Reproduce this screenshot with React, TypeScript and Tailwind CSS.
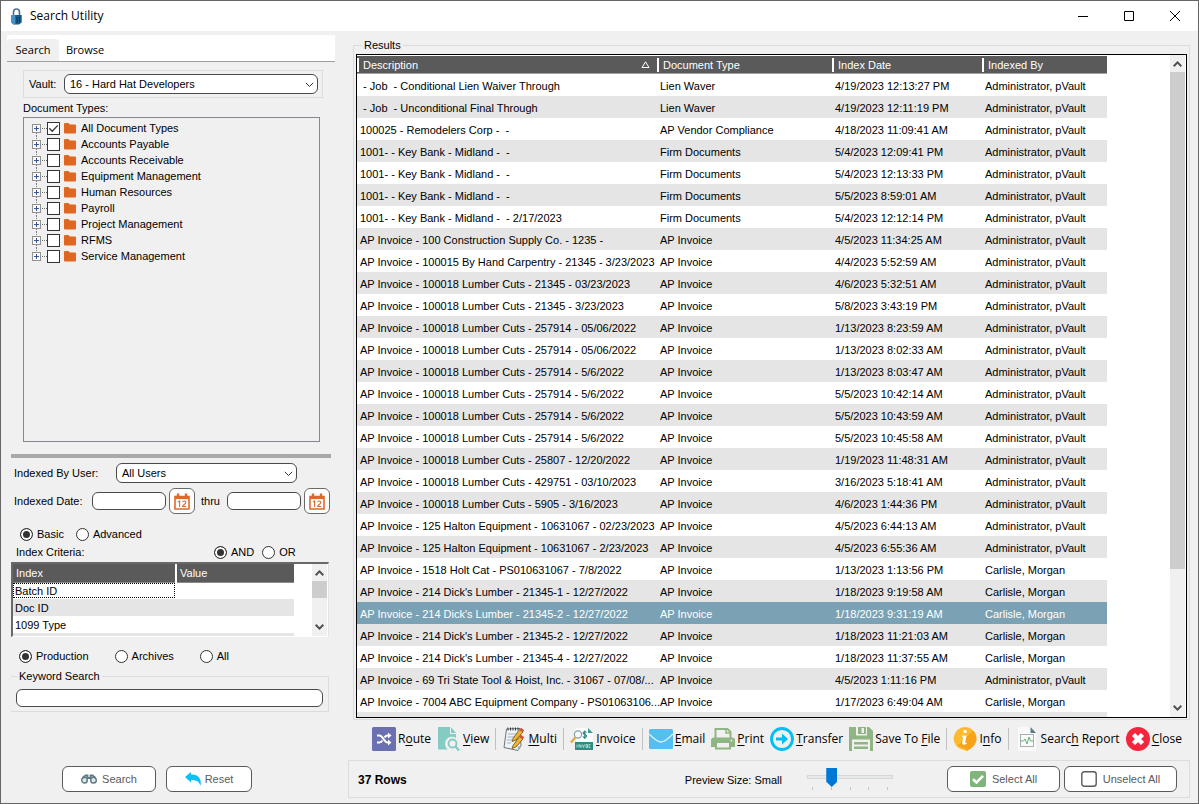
import React from "react";

type Row = [string, string, string, string];

const ADMIN = "Administrator, pVault";
const MORGAN = "Carlisle, Morgan";

const rows: Row[] = [
  [" - Job  - Conditional Lien Waiver Through", "Lien Waver", "4/19/2023 12:13:27 PM", ADMIN],
  [" - Job  - Unconditional Final Through", "Lien Waver", "4/19/2023 12:11:19 PM", ADMIN],
  ["100025 - Remodelers Corp -  -", "AP Vendor Compliance", "4/18/2023 11:09:41 AM", ADMIN],
  ["1001- - Key Bank - Midland -  -", "Firm Documents", "5/4/2023 12:09:41 PM", ADMIN],
  ["1001- - Key Bank - Midland -  -", "Firm Documents", "5/4/2023 12:13:33 PM", ADMIN],
  ["1001- - Key Bank - Midland -  -", "Firm Documents", "5/5/2023 8:59:01 AM", ADMIN],
  ["1001- - Key Bank - Midland -  - 2/17/2023", "Firm Documents", "5/4/2023 12:12:14 PM", ADMIN],
  ["AP Invoice - 100 Construction Supply Co. - 1235 -", "AP Invoice", "4/5/2023 11:34:25 AM", ADMIN],
  ["AP Invoice - 100015 By Hand Carpentry - 21345 - 3/23/2023", "AP Invoice", "4/4/2023 5:52:59 AM", ADMIN],
  ["AP Invoice - 100018 Lumber Cuts - 21345 - 03/23/2023", "AP Invoice", "4/6/2023 5:32:51 AM", ADMIN],
  ["AP Invoice - 100018 Lumber Cuts - 21345 - 3/23/2023", "AP Invoice", "5/8/2023 3:43:19 PM", ADMIN],
  ["AP Invoice - 100018 Lumber Cuts - 257914 - 05/06/2022", "AP Invoice", "1/13/2023 8:23:59 AM", ADMIN],
  ["AP Invoice - 100018 Lumber Cuts - 257914 - 05/06/2022", "AP Invoice", "1/13/2023 8:02:33 AM", ADMIN],
  ["AP Invoice - 100018 Lumber Cuts - 257914 - 5/6/2022", "AP Invoice", "1/13/2023 8:03:47 AM", ADMIN],
  ["AP Invoice - 100018 Lumber Cuts - 257914 - 5/6/2022", "AP Invoice", "5/5/2023 10:42:14 AM", ADMIN],
  ["AP Invoice - 100018 Lumber Cuts - 257914 - 5/6/2022", "AP Invoice", "5/5/2023 10:43:59 AM", ADMIN],
  ["AP Invoice - 100018 Lumber Cuts - 257914 - 5/6/2022", "AP Invoice", "5/5/2023 10:45:58 AM", ADMIN],
  ["AP Invoice - 100018 Lumber Cuts - 25807 - 12/20/2022", "AP Invoice", "1/19/2023 11:48:31 AM", ADMIN],
  ["AP Invoice - 100018 Lumber Cuts - 429751 - 03/10/2023", "AP Invoice", "3/16/2023 5:18:41 AM", ADMIN],
  ["AP Invoice - 100018 Lumber Cuts - 5905 - 3/16/2023", "AP Invoice", "4/6/2023 1:44:36 PM", ADMIN],
  ["AP Invoice - 125 Halton Equipment - 10631067 - 02/23/2023", "AP Invoice", "4/5/2023 6:44:13 AM", ADMIN],
  ["AP Invoice - 125 Halton Equipment - 10631067 - 2/23/2023", "AP Invoice", "4/5/2023 6:55:36 AM", ADMIN],
  ["AP Invoice - 1518 Holt Cat - PS010631067 - 7/8/2022", "AP Invoice", "1/13/2023 1:13:56 PM", MORGAN],
  ["AP Invoice - 214 Dick's Lumber - 21345-1 - 12/27/2022", "AP Invoice", "1/18/2023 9:19:58 AM", MORGAN],
  ["AP Invoice - 214 Dick's Lumber - 21345-2 - 12/27/2022", "AP Invoice", "1/18/2023 9:31:19 AM", MORGAN],
  ["AP Invoice - 214 Dick's Lumber - 21345-2 - 12/27/2022", "AP Invoice", "1/18/2023 11:21:03 AM", MORGAN],
  ["AP Invoice - 214 Dick's Lumber - 21345-4 - 12/27/2022", "AP Invoice", "1/18/2023 11:37:55 AM", MORGAN],
  ["AP Invoice - 69 Tri State Tool & Hoist, Inc. - 31067 - 07/08/...", "AP Invoice", "4/5/2023 1:11:16 PM", ADMIN],
  ["AP Invoice - 7004 ABC Equipment Company - PS01063106...", "AP Invoice", "1/17/2023 6:49:04 AM", MORGAN],
];

const SELECTED_ROW = 24;

const docTypes = [
  "All Document Types",
  "Accounts Payable",
  "Accounts Receivable",
  "Equipment Management",
  "Human Resources",
  "Payroll",
  "Project Management",
  "RFMS",
  "Service Management",
];

function Chevron({ up = false }: { up?: boolean }) {
  return (
    <svg width="9" height="6" viewBox="0 0 9 6" fill="none" stroke="#505050" strokeWidth="2">
      <path d={up ? "M.7 5.2 4.5 1.4 8.3 5.2" : "M.7 .8 4.5 4.6 8.3 .8"} />
    </svg>
  );
}

function Dropdown({ id, value, className }: { id: string; value: string; className: string }) {
  return (
    <div className={`relative ${className}`}>
      <select
        id={id}
        className="block h-5 w-full appearance-none rounded-md border border-[#4a4a4a] bg-white pr-6 pl-[5px] text-[11px] leading-4 outline-none"
      >
        <option>{value}</option>
      </select>
      <svg className="pointer-events-none absolute top-2 right-1" width="9" height="6" viewBox="0 0 9 6" fill="none" stroke="#333">
        <path d="M.8 .8 4.5 4.5 8.2 .8" />
      </svg>
    </div>
  );
}

function Radio({ name, label, checked = false }: { name: string; label: string; checked?: boolean }) {
  return (
    <label className="flex items-center gap-1">
      <input
        type="radio"
        name={name}
        defaultChecked={checked}
        className="size-[13px] appearance-none rounded-full border border-[#333] bg-white checked:bg-[#333] checked:shadow-[inset_0_0_0_2px_white]"
      />
      {label}
    </label>
  );
}

function CalendarButton({ label }: { label: string }) {
  return (
    <button aria-label={label} className="flex size-[26px] items-center justify-center rounded-md border border-[#6a6a6a] bg-white">
      <svg width="16" height="17" viewBox="0 0 16 17" fill="none" stroke="#dd6b2c">
        <path d="M1 3.5h14v12.5H1z" strokeWidth="1.6" />
        <path d="M1 4.8h14" strokeWidth="2.6" />
        <path d="M4 .5v4M12 .5v4" strokeWidth="2.4" />
        <path d="M4 9l1.6-1v6M8.6 9.2c.3-1.6 3.2-1.5 3.2.2 0 1.500-3.200 3-3.200 4.100h3.600" strokeWidth="1.1" />
      </svg>
    </button>
  );
}

function TreeRow({ label, index, last }: { label: string; index: number; last: boolean }) {
  return (
    <li className="flex h-4 items-center">
      <button aria-label={`Expand ${label}`} className="h-4 w-[15px]">
        <svg width="15" height="16" viewBox="0 0 15 16" fill="none" shapeRendering="crispEdges">
          {!last && <path d="M4.5 13v3" stroke="#777" strokeDasharray="1 1" />}
          {index > 0 && <path d="M4.5 0v3" stroke="#777" strokeDasharray="1 1" />}
          <path d="M10 8.5h5" stroke="#777" strokeDasharray="1 1" />
          <rect x=".5" y="4.5" width="8" height="8" fill="#fafafa" stroke="#919191" />
          <path d="M2 8.5h5M4.5 6v5" stroke="#3a559b" />
        </svg>
      </button>
      <label className="flex h-4 items-center">
        <span className="relative flex size-[13px]">
          <input
            type="checkbox"
            defaultChecked={index === 0}
            className="peer size-[13px] appearance-none border border-[#333] bg-white"
          />
          <svg className="pointer-events-none absolute inset-0 hidden peer-checked:block" width="13" height="13" viewBox="0 0 13 13" fill="none" stroke="#333" strokeWidth="1.3">
            <path d="M2.3 6.3 5.2 9.2 10.8 3.4" />
          </svg>
        </span>
        <svg className="mr-[5px] ml-1" width="12" height="11" viewBox="0 0 12 11" fill="#e0671f">
          <path d="M1 0h3.6l1.2 1.6H11a1 1 0 0 1 1 1V9.5a1 1 0 0 1-1 1H1a1 1 0 0 1-1-1V1a1 1 0 0 1 1-1z" />
        </svg>
        {label}
      </label>
    </li>
  );
}

const icons: Record<string, React.ReactNode> = {
  route: (
    <svg width="24" height="24" viewBox="0 0 24 24" fill="none">
      <rect width="24" height="24" rx="1.5" fill="#6a70b2" />
      <g stroke="#fff" strokeWidth="2">
        <path d="M5 8.5h2.5c3.5 0 4.5 7 8 7H17" />
        <path d="M5 15.5h2.5c1.3 0 2.2-.9 2.9-2M12.5 10.5c.8-1.2 1.7-2 3-2H17" />
      </g>
      <path d="M16 5.5 19.5 8.5 16 11.5zM16 12.5 19.5 15.5 16 18.5z" fill="#fff" />
    </svg>
  ),
  view: (
    <svg width="24" height="24" viewBox="0 0 24 24" fill="none">
      <path d="M1 0h12v7h6v4a7 7 0 0 0-8 11.5H1z" fill="#84cbc4" />
      <path d="M14 0v6h5z" fill="#84cbc4" />
      <circle cx="15.500" cy="16.500" r="4" stroke="#84cbc4" strokeWidth="1.8" />
      <path d="M18.500 19.500 22 23.500" stroke="#84cbc4" strokeWidth="2.2" />
    </svg>
  ),
  multi: (
    <svg width="24" height="24" viewBox="0 0 24 24" fill="none">
      <path d="M4.500 2 18 1.500 19 19 16 23.500 2 20.500z" fill="#eef3f8" stroke="#6d747c" />
      <path d="M16 23.500 15.500 19.500 19 19z" fill="#a9b3bd" />
      <path d="M6 7h9M5.500 10h7M5 13h5M5 16h4" stroke="#9fb3c6" />
      <path d="M6 .5v3M8.500 .5v3M11 .5v3M13.500 .5v3M16 .5v3" stroke="#3c3c3c" />
      <path d="M11 11.500 17.500 2.500 21 5 14 13 10 14.500z" fill="#f0b52f" stroke="#6d4d1a" strokeWidth=".8" />
      <path d="M17.500 2.500 19 .8 22.200 3.200 21 5z" fill="#d84c3e" />
      <path d="M11 18.500 17.500 9.500 21 12 14 20 10 21.500z" fill="#f0b52f" stroke="#6d4d1a" strokeWidth=".8" />
      <path d="M17.500 9.500 19 7.800 22.200 10.200 21 12z" fill="#d84c3e" />
    </svg>
  ),
  invoice: (
    <svg width="24" height="24" viewBox="0 0 24 24" fill="none">
      <path d="M6 1h12l5 5v17H6z" fill="#fff" />
      <path d="M18 1l5 5h-5z" fill="#3b9c8e" />
      <circle cx="8" cy="7.500" r="3.600" stroke="#8a9da8" strokeWidth="1.2" fill="#f8fcff" />
      <path d="M5.300 10.500 1 15.500" stroke="#eba53a" strokeWidth="2.2" />
      <path d="M16.500 5.500c-.7-1.200-3.400-1-3.400.6 0 1.900 3.500 1 3.500 3 0 1.700-3 1.800-3.700.4M14.800 3.500v8.500" stroke="#247f78" strokeWidth="1.1" />
      <rect x="5" y="15" width="18" height="8" fill="#2f8c80" />
      <path d="M7 17.500v3M9 20.500v-3l2 3v-3M12.500 17.500l1 3 1-3M16 17.500h1.500v3H16zM20.500 17.500H19v3h1.500" stroke="#cfe9e5" strokeWidth=".8" />
    </svg>
  ),
  email: (
    <svg width="24" height="20" viewBox="0 0 24 20" fill="none">
      <rect width="24" height="20" rx="1.5" fill="#55bff0" />
      <path d="M0 5c4 3.500 8 8 12 8s8-4.500 12-8" stroke="#d9f2fd" strokeWidth="1.3" />
    </svg>
  ),
  print: (
    <svg width="24" height="24" viewBox="0 0 24 24" fill="none">
      <path d="M4.500 11V2h12l3 3v6" stroke="#8fb583" strokeWidth="2" />
      <path d="M15 1v5h5" stroke="#8fb583" strokeWidth="1.5" />
      <path d="M3 10.500h18a3 3 0 0 1 3 3V20h-4v-4H4v4H0v-6.500a3 3 0 0 1 3-3z" fill="#8fb583" />
      <path d="M5 16v5.500h14V16" stroke="#8fb583" strokeWidth="2" />
      <circle cx="20.500" cy="13.500" r=".9" fill="#f0f0f0" />
    </svg>
  ),
  transfer: (
    <svg width="24" height="24" viewBox="0 0 24 24" fill="none">
      <circle cx="12" cy="12" r="10.500" stroke="#00bff3" strokeWidth="2.8" />
      <path d="M6 10.500h6V6.500L18 12l-6 5.500v-4H6z" fill="#00bff3" />
    </svg>
  ),
  save: (
    <svg width="24" height="24" viewBox="0 0 24 24" fill="#8fb583">
      <path d="M0 0h7v8.500h11V0h2l4 4v20h-3V12.500H3V24H0z" />
      <path d="M9 0h8v7H9zM5 15h14v2.500H5zM5 19.500h14V22H5z" />
      <path d="M12.500 1h2.500v5h-2.500z" fill="#f0f0f0" />
    </svg>
  ),
  info: (
    <svg width="24" height="24" viewBox="0 0 24 24">
      <path d="M12 0a11.500 11.500 0 0 0-2 22.800L14 24l4.500-3A11.500 11.500 0 0 0 12 0z" fill="#ffb92e" />
      <path d="M20 3.500A11.500 11.500 0 0 1 17.500 21.500L14 24v-1.500L4.500 19z" fill="#f6a31a" />
      <path d="M13.300 3.200a1.700 1.700 0 1 1-2.400 2.400 1.700 1.700 0 0 1 2.400-2.400zM9.500 8.500h4l-1.300 7c0 .8.800.6 1.600.1l-.2 1.200c-2 1.500-4.800 1.400-4.400-1l.9-5.600-1.200-.3z" fill="#fff" />
    </svg>
  ),
  report: (
    <svg width="24" height="24" viewBox="0 0 24 24" fill="none">
      <path d="M3 0h13l5 6v18H3z" fill="#fafafa" />
      <path d="M15.500 0 21 6h-5.500z" fill="#5d7885" />
      <rect x="5.500" y="7.500" width="13" height="12" stroke="#a3b0b6" />
      <path d="M5.500 14h3l1.500-2 2 5 2-7 1.500 4h3" stroke="#6bb074" />
    </svg>
  ),
  close: (
    <svg width="24" height="24" viewBox="0 0 24 24" fill="none">
      <circle cx="12" cy="12" r="12" fill="#f5253d" />
      <path d="M7.500 7.500l9 9M16.500 7.500l-9 9" stroke="#fff" strokeWidth="4.5" />
    </svg>
  ),
};

function Tool({ icon, pre = "", hot, post = "" }: { icon: string; pre?: string; hot: string; post?: string }) {
  return (
    <button className="flex h-6 items-center gap-0.5 whitespace-nowrap">
      {icons[icon]}
      <span>
        {pre}
        <span className="underline underline-offset-2">{hot}</span>
        {post}
      </span>
    </button>
  );
}

function Separator() {
  return <div className="h-[22px] w-px bg-[#c0c0c0]" />;
}

function Th({ children, className }: { children: React.ReactNode; className: string }) {
  return (
    <th className={`p-0 text-left font-normal ${className}`}>
      <div className="flex h-[14px] items-center border-l-2 border-white pt-px pr-[7px] pl-1">{children}</div>
    </th>
  );
}

export default function App() {
  return (
    <div className="flex h-screen flex-col border border-[#666] bg-[#f0f0f0] font-['Liberation_Sans',Arial,sans-serif] text-[11px] leading-4 text-black">
      <header className="flex h-[30px] shrink-0 items-center bg-white pl-2.5 font-['Open_Sans','Segoe_UI',sans-serif] text-xs">
        <svg className="mr-2" width="11" height="17" viewBox="0 0 11 17" fill="none">
          <path d="M2.500 8V4a3 3 0 0 1 6 0v4" stroke="#4f7186" strokeWidth="1.6" />
          <path d="M.3 7h10.400v7.500L8 16.500H2.500L.3 14.500z" fill="#175a8a" />
          <path d="M.3 7h4v9L2.500 16.500.3 14.500z" fill="#4694c6" />
          <path d="M6 9v6M8.500 9v5" stroke="#0c3c62" />
        </svg>
        <h1 className="grow">Search Utility</h1>
        <button aria-label="Minimize" className="flex h-full w-[46px] items-center justify-center">
          <svg width="10" height="10" stroke="#000"><path d="M0 5.5h10" /></svg>
        </button>
        <button aria-label="Maximize" className="flex h-full w-[46px] items-center justify-center">
          <svg width="10" height="10" fill="none" stroke="#000"><path d="M.5 .5h9v9h-9z" /></svg>
        </button>
        <button aria-label="Close window" className="flex h-full w-[46px] items-center justify-center">
          <svg width="10" height="10" stroke="#000"><path d="M0 0l10 10M10 0L0 10" /></svg>
        </button>
      </header>

      <div className="flex min-h-0 grow">
        <aside className="flex w-[346px] shrink-0 flex-col pt-1">
          <div className="mr-3 ml-1.5 flex h-[27px] items-end border-b border-[#a0a0a0] bg-white font-['Open_Sans','Segoe_UI',sans-serif] text-[11px]">
            <button className="h-[22px] w-[52px] rounded-t bg-[#f0f0f0]">Search</button>
            <button className="h-[22px] w-[52px]">Browse</button>
          </div>

          <div className="mt-2 mr-6 ml-[22px] flex h-7 items-center border border-[#dcdcdc] pr-[3px] pl-[5px]">
            <label htmlFor="vault" className="w-[35px]">Vault:</label>
            <Dropdown id="vault" value="16 - Hard Hat Developers" className="w-[254px]" />
          </div>
          <div className="mt-[2px] ml-[22px]">Document Types:</div>
          <ul className="mt-[1px] mr-[27px] ml-[22px] grow border border-[#828790] pt-0.5 pl-2">
            {docTypes.map((label, i) => (
              <TreeRow key={label} label={label} index={i} last={i === docTypes.length - 1} />
            ))}
          </ul>

          <div className="mt-3 mr-4 ml-2.5 h-1 shrink-0 bg-[#a8a8a8]" />

          <div className="mt-[5px] ml-[13px] flex items-center">
            <label htmlFor="user" className="w-[102px]">Indexed By User:</label>
            <Dropdown id="user" value="All Users" className="w-[181px]" />
          </div>
          <div className="mt-[5px] ml-[13px] flex items-center">
            <label htmlFor="from" className="w-[78px]">Indexed Date:</label>
            <input id="from" className="mr-[3px] h-[18px] w-[74px] rounded-md border border-[#4a4a4a] bg-white px-1" />
            <CalendarButton label="Choose start date" />
            <label htmlFor="to" className="w-8 pl-1.5">thru</label>
            <input id="to" className="mr-[3px] h-[18px] w-[74px] rounded-md border border-[#4a4a4a] bg-white px-1" />
            <CalendarButton label="Choose end date" />
          </div>

          <div className="mt-3 ml-[19px] flex gap-3">
            <Radio name="mode" label="Basic" checked />
            <Radio name="mode" label="Advanced" />
          </div>
          <div className="mt-[2px] ml-[15px] flex items-center gap-2">
            <span className="w-[190px]">Index Criteria:</span>
            <Radio name="join" label="AND" checked />
            <Radio name="join" label="OR" />
          </div>

          <div className="mt-[2px] mr-[18px] ml-2.5 flex h-[75px] shrink-0 overflow-hidden border-t-2 border-r border-b border-l-2 border-t-[#696969] border-r-[#e3e3e3] border-b-white border-l-[#696969] bg-white pr-px">
            <div className="grow">
              <table className="w-[281px] table-fixed border-collapse">
                <thead>
                  <tr className="h-[18px] border-b border-[#8a8a8a] bg-[#5a5a5a] text-white">
                    <th className="w-[163px] border-r-2 border-white p-0 pl-[3px] text-left font-normal">Index</th>
                    <th className="p-0 pl-[3px] text-left font-normal">Value</th>
                  </tr>
                </thead>
                <tbody>
                  {["Batch ID", "Doc ID", "1099 Type", ""].map((name, i) => (
                    <tr key={name} className="h-[17px] odd:bg-white even:bg-[#e5e5e5]">
                      <td className="p-0">
                        <div className={i === 0 ? "h-[15px] w-[162px] border border-dotted border-black pl-px leading-[15px]" : "h-[17px] pt-px pl-0.5 leading-[17px]"}>{name}</div>
                      </td>
                      <td />
                    </tr>
                  ))}
                </tbody>
              </table>
            </div>
            <div className="flex w-[15px] flex-col items-center bg-[#f0f0f0]">
              <div className="flex h-[17px] items-center"><Chevron up /></div>
              <div className="h-[17px] w-full bg-[#cdcdcd]" />
              <div className="flex grow items-end pb-1.5"><Chevron /></div>
            </div>
          </div>

          <div className="mt-[11px] ml-[18px] flex gap-[26px]">
            <Radio name="scope" label="Production" checked />
            <Radio name="scope" label="Archives" />
            <Radio name="scope" label="All" />
          </div>

          <fieldset className="mt-1 mr-[18px] ml-2.5 border border-l-0 border-[#dcdcdc] px-[5px] pb-1">
            <legend className="ml-px px-0.5">
              <label htmlFor="keyword">Keyword Search</label>
            </legend>
            <input id="keyword" className="mt-[5px] block h-[18px] w-full rounded-md border border-[#4a4a4a] bg-white px-1" />
          </fieldset>

          <div className="mt-[54px] mb-[11px] ml-[61px] flex gap-2.5 text-[#5a5a5a]">
            <button className="flex h-[26px] w-[94px] items-center justify-center gap-[5px] rounded-md border border-[#5a5a5a] bg-white">
              <svg width="16" height="10" viewBox="0 0 16 10" fill="none" stroke="#5f7886" strokeWidth="1.4">
                <circle cx="3.500" cy="6.200" r="2.800" fill="#dfe7ea" />
                <circle cx="12.500" cy="6.200" r="2.800" fill="#dfe7ea" />
                <path d="M1.500 4 4.500 1.500h2V5M14.500 4l-3-2.500h-2V5M6.500 4h3" strokeWidth="1.8" />
              </svg>
              Search
            </button>
            <button className="flex h-[26px] w-[86px] items-center justify-center gap-1 rounded-md border border-[#5a5a5a] bg-white">
              <svg width="16" height="14" viewBox="0 0 16 14" fill="#0fc0f5">
                <path d="M0 5 6 0v2.500c7 0 11 3.500 9.500 11.500C14.500 9.500 11 8 6 8v2.500z" />
              </svg>
              Reset
            </button>
          </div>
        </aside>

        <main className="mr-2 flex min-w-0 grow flex-col pt-1.5">
          <fieldset className="ml-[6px] flex min-h-0 min-w-0 grow flex-col border border-[#dcdcdc] px-[2px] pb-px">
            <legend className="ml-1.5 px-0.5">Results</legend>
            <div className="mt-px flex min-h-0 grow border border-black bg-white">
              <div className="min-w-0 grow overflow-hidden">
                <table className="w-[750px] table-fixed border-collapse">
                  <thead>
                    <tr className="h-[18px] border-t border-b border-t-white border-b-[#a0a0a0] bg-[#5a5a5a] text-white">
                      <Th className="w-[300px]">
                        <span className="grow">Description</span>
                        <svg width="9" height="8" viewBox="0 0 9 8" fill="none" stroke="#fff"><path d="M1 6.5h7L4.5 .8z" /></svg>
                      </Th>
                      <Th className="w-[175px]">Document Type</Th>
                      <Th className="w-[150px]">Index Date</Th>
                      <Th className="w-[125px]">Indexed By</Th>
                    </tr>
                  </thead>
                  <tbody>
                    {rows.map((row, i) => (
                      <tr
                        key={i}
                        className={`h-[22px] whitespace-pre ${i === SELECTED_ROW ? "bg-[#7ba2b4] text-white" : i % 2 ? "bg-[#e5e5e5]" : "bg-white"}`}
                      >
                        {row.map((cell, c) => (
                          <td key={c} className="p-0 pt-0.5 pl-[3px]">{cell}</td>
                        ))}
                      </tr>
                    ))}
                    <tr className="h-[22px] bg-[#e5e5e5]">
                      <td colSpan={4} />
                    </tr>
                  </tbody>
                </table>
              </div>
              <div className="mr-px flex w-[15px] shrink-0 flex-col items-center bg-[#f0f0f0]">
                <div className="flex h-[17px] shrink-0 items-center"><Chevron up /></div>
                <div className="h-3/4 w-full bg-[#cdcdcd]" />
                <div className="flex grow items-end pb-1.5"><Chevron /></div>
              </div>
            </div>
          </fieldset>

          <div className="mr-2 ml-[25px] flex h-10 shrink-0 items-center justify-between pb-[3px] font-['Open_Sans','Segoe_UI',sans-serif] text-xs">
            <Tool icon="route" pre="R" hot="o" post="ute" />
            <Tool icon="view" hot="V" post="iew" />
            <Separator />
            <Tool icon="multi" hot="M" post="ulti" />
            <Separator />
            <Tool icon="invoice" hot="I" post="nvoice" />
            <Separator />
            <Tool icon="email" hot="E" post="mail" />
            <Tool icon="print" hot="P" post="rint" />
            <Tool icon="transfer" hot="T" post="ransfer" />
            <Tool icon="save" pre="Save To " hot="F" post="ile" />
            <Separator />
            <Tool icon="info" pre="I" hot="n" post="fo" />
            <Separator />
            <Tool icon="report" pre="Searc" hot="h" post=" Report" />
            <Tool icon="close" hot="C" post="lose" />
          </div>

          <footer className="mb-[5px] ml-px flex h-[38px] shrink-0 items-center border border-[#dcdcdc] pr-3 pl-[9px]">
            <strong className="grow pt-0.5 text-xs">37 Rows</strong>
            <label htmlFor="preview" className="mr-[25px] pt-0.5">Preview Size: Small</label>
            <div className="mr-[54px] flex h-6 w-[86px] flex-col">
              <input
                id="preview"
                type="range"
                min={0}
                max={4}
                defaultValue={1}
                className="h-5 w-full appearance-none bg-transparent [&::-webkit-slider-runnable-track]:h-1 [&::-webkit-slider-runnable-track]:border [&::-webkit-slider-runnable-track]:border-[#d6d6d6] [&::-webkit-slider-runnable-track]:bg-[#e7eaea] [&::-webkit-slider-thumb]:-mt-2 [&::-webkit-slider-thumb]:h-[19px] [&::-webkit-slider-thumb]:w-[11px] [&::-webkit-slider-thumb]:appearance-none [&::-webkit-slider-thumb]:bg-[#0078d7] [&::-webkit-slider-thumb]:[clip-path:polygon(0_0,100%_0,100%_72%,50%_100%,0_72%)]"
              />
              <div className="mx-[5px] flex h-[3px] justify-between">
                {[0, 1, 2, 3, 4].map((n) => (
                  <span key={n} className="w-px bg-[#c4c4c4]" />
                ))}
              </div>
            </div>
            <div className="flex gap-1 text-[#5a5a5a]">
              <button className="flex h-[26px] w-[113px] items-center justify-center gap-1.5 rounded-md border border-[#5a5a5a] bg-white">
                <svg width="16" height="16" viewBox="0 0 16 16" fill="none">
                  <rect width="16" height="16" rx="2" fill="#7fb57b" />
                  <path d="M3 8.2 6.5 11.5 13 4.8" stroke="#fff" strokeWidth="2.6" />
                </svg>
                Select All
              </button>
              <button className="flex h-[26px] w-[113px] items-center justify-center gap-1.5 rounded-md border border-[#5a5a5a] bg-white">
                <svg width="16" height="16" viewBox="0 0 16 16" fill="none">
                  <rect x=".8" y=".8" width="14.4" height="14.4" rx="2.5" stroke="#5a5a5a" strokeWidth="1.4" />
                </svg>
                Unselect All
              </button>
            </div>
          </footer>
        </main>
      </div>
    </div>
  );
}
